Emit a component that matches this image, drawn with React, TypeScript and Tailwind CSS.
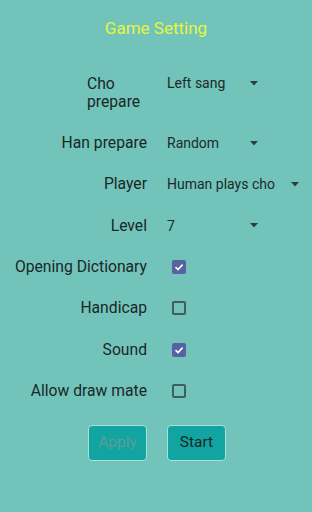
import React from "react";

const font = { fontFamily: "Roboto, 'Liberation Sans', sans-serif" };

function Arrow() {
  return (
    <svg width="8" height="5" viewBox="0 0 8 5" className="ml-4 shrink-0">
      <path d="M0 0 L8 0 L4 4.5 Z" fill="#2b3d3d" />
    </svg>
  );
}

function Dropdown({ value }: { value: string }) {
  return (
    <div className="flex items-center text-[14px] leading-[18px] text-[#1c2a2a]">
      <span className="min-w-[67px] whitespace-nowrap">{value}</span>
      <Arrow />
    </div>
  );
}

function Check({ checked }: { checked: boolean }) {
  if (checked) {
    return (
      <div className="ml-[5px] flex h-[14px] w-[14px] items-center justify-center rounded-[2px] bg-[#5662a1]">
        <svg width="10" height="10" viewBox="0 0 10 10">
          <path d="M1.5 5.2 L4 7.6 L8.6 2.6" stroke="#ffffff" strokeWidth="1.6" fill="none" />
        </svg>
      </div>
    );
  }
  return <div className="ml-[5px] h-[14px] w-[14px] rounded-[2px] border-2 border-[#3f5e5e]" />;
}

function Row({ label, children }: { label: string; children: React.ReactNode }) {
  return (
    <div className="grid h-[41.3px] grid-cols-[147px_1fr] items-center gap-x-5">
      <div className="whitespace-nowrap text-right text-[15.7px] leading-[18px] text-[#1a2727]">{label}</div>
      <div>{children}</div>
    </div>
  );
}

export default function App() {
  return (
    <div className="h-[512px] w-[312px] overflow-hidden bg-[#72c4bb]" style={font}>
      <div className="pt-4 text-center text-[17px] leading-6 text-[#e6f53c]">Game Setting</div>

      <div className="mt-6 grid h-[58.5px] grid-cols-[147px_1fr] items-start gap-x-5">
        <div className="ml-auto w-[60px] pt-[11px] text-left text-[15.7px] leading-[18px] text-[#1a2727]">
          Cho prepare
        </div>
        <div className="pt-[10px]">
          <Dropdown value="Left sang" />
        </div>
      </div>

      <Row label="Han prepare">
        <Dropdown value="Random" />
      </Row>
      <Row label="Player">
        <Dropdown value="Human plays cho" />
      </Row>
      <Row label="Level">
        <Dropdown value="7" />
      </Row>
      <Row label="Opening Dictionary">
        <Check checked />
      </Row>
      <Row label="Handicap">
        <Check checked={false} />
      </Row>
      <Row label="Sound">
        <Check checked />
      </Row>
      <Row label="Allow draw mate">
        <Check checked={false} />
      </Row>

      <div className="mt-[13px] grid grid-cols-[147px_1fr] gap-x-5">
        <div className="flex justify-end">
          <button className="h-[36px] w-[59px] rounded-[4px] border border-[#a6e2db] bg-[#12a4a0] text-[15.5px] text-[#5e9e9a]">
            Apply
          </button>
        </div>
        <div>
          <button className="h-[36px] w-[59px] rounded-[4px] border border-[#a6e2db] bg-[#12a4a0] text-[15.5px] text-[#1a2727]">
            Start
          </button>
        </div>
      </div>
    </div>
  );
}
